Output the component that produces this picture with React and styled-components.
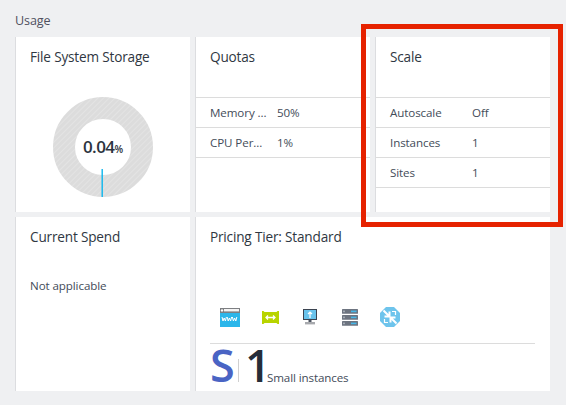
import React from 'react';
import styled, { createGlobalStyle } from 'styled-components';

const Global = createGlobalStyle`
  html, body { margin: 0; padding: 0; background: #eff0f2; }
  body { font-family: "Open Sans", "Noto Sans", sans-serif; color: #3c4654; overflow: hidden; }
`;
const Page = styled.div`
  position: relative; width: 566px; height: 405px; box-sizing: border-box; padding: 12px 0 0 15px; overflow: hidden;
`;
const Heading = styled.div`
  font-size: 12.6px; line-height: 18px; height: 25px; letter-spacing: -0.15px; color: #50505f;
`;
const Grid = styled.div`
  display: grid; grid-template-columns: 175px 175px 175px; grid-template-rows: 175px 174px; gap: 5px;
`;
const Card = styled.section`
  background: #fff; border-left: 1px solid #dcdde0; grid-column: span ${p => p.$span || 1};
  display: flex; flex-direction: column; min-width: 0;
`;
const Title = styled.h2`
  margin: 0; padding: 11px 14px 0; font-weight: 400; font-size: 13.6px; line-height: 18px; color: #2f3742; letter-spacing: -0.18px; white-space: nowrap;
`;
const Rows = styled.div`
  margin-top: 31px; border-top: 1px solid #dcdcdc;
`;
const Row = styled.div`
  display: grid; grid-template-columns: ${p => p.$label}px 1fr; height: 29px; padding: 0 14px; align-items: center;
  border-bottom: 1px solid #dcdcdc; font-size: 11.6px; letter-spacing: -0.1px; color: #434c59;
  & > span:first-child { white-space: nowrap; }
`;
const DonutWrap = styled.div`
  position: relative; width: 100px; height: 100px; margin: 31px 0 0 37px;
`;
const DonutLabel = styled.div`
  position: absolute; inset: 0; display: flex; align-items: center; justify-content: center; padding-bottom: 1px;
  font-size: 17px; font-weight: 600; letter-spacing: -0.6px; color: #2c3440;
  & small { font-size: 10px; font-weight: 600; margin-top: 4px; letter-spacing: 0; }
`;
const Plain = styled.p`
  margin: 31px 0 0; padding: 0 14px; font-size: 11.6px; letter-spacing: -0.1px; color: #434c59; line-height: 18px;
`;
const Icons = styled.div`
  display: flex; align-items: center; margin: 60px 0 0 14px; height: 22px;
`;
const IconSlot = styled.div`
  width: 40px; display: flex; justify-content: center; align-items: center;
`;
const Tier = styled.div`
  margin: 15px 14px 0; border-top: 1px solid #dcdcdc; display: flex; align-items: flex-end; height: 41px; width: 325px;
`;
const TierLetter = styled.span`
  font-size: 45px; line-height: 42px; color: #4a64c4; font-weight: 600; width: 28px; margin-bottom: -1px;
`;
const TierSep = styled.span`
  width: 1px; height: 23px; background: #d0d0d0; margin: 0 6px 3px 0;
`;
const TierCount = styled.span`
  font-size: 45px; line-height: 42px; color: #262d38; font-weight: 600; width: 22px; margin-bottom: -1px;
`;
const TierLabel = styled.span`
  font-size: 11.6px; letter-spacing: -0.12px; line-height: 16px; color: #434c59; margin-bottom: -1px;
`;
const RedBox = styled.div`
  position: absolute; left: 361px; top: 24px; width: 202px; height: 203px; box-sizing: border-box; border: 5px solid #e62200;
`;

const Donut = () => (
  <svg width="100" height="100" viewBox="0 0 100 100">
    <defs>
      <pattern id="hatch" width="4" height="4" patternUnits="userSpaceOnUse" patternTransform="rotate(45)">
        <rect width="4" height="4" fill="#dcdcdc" />
        <rect width="1" height="4" fill="#e3e3e3" />
      </pattern>
    </defs>
    <circle cx="50" cy="50" r="39" fill="none" stroke="url(#hatch)" strokeWidth="22" />
    <rect x="48.5" y="72" width="1.4" height="28" fill="#0db6ee" />
  </svg>
);

const WwwIcon = () => (
  <svg width="20" height="19" viewBox="0 0 20 19">
    <rect width="20" height="5" fill="#7d7f82" />
    <rect x="4" y="1" width="15" height="2.4" fill="#f4f4f4" />
    <circle cx="2" cy="2.4" r="1.2" fill="#fff" />
    <rect y="5" width="20" height="14" fill="#2bb6ea" />
    <path d="M2 9l1 4 1.2-3 1.2 3 1-4M7.2 9l1 4 1.2-3 1.2 3 1-4M12.4 9l1 4 1.2-3 1.2 3 1-4" fill="none" stroke="#fff" strokeWidth="1" />
  </svg>
);
const GreenIcon = () => (
  <svg width="17" height="13" viewBox="0 0 17 13">
    <path d="M0 0h1.5l1 1h12l1-1H17v13h-1.5l-1-1h-12l-1 1H0z" fill="#b8d400" />
    <path d="M4 6.5h9M6 4.5l-2 2 2 2M11 4.5l2 2-2 2" fill="none" stroke="#fff" strokeWidth="1.3" />
  </svg>
);
const MonitorIcon = () => (
  <svg width="14" height="16" viewBox="0 0 14 16">
    <rect width="14" height="11" fill="#3b4350" />
    <rect x="1" y="1" width="12" height="9" fill="#69c3ec" />
    <path d="M7 9V3M5 5l2-2 2 2" fill="none" stroke="#fff" strokeWidth="1.2" />
    <rect x="5.5" y="11" width="3" height="2" fill="#4c5360" />
    <rect x="2" y="13" width="10" height="2.4" fill="#a7a9ad" />
  </svg>
);
const ServerIcon = () => (
  <svg width="16" height="17" viewBox="0 0 16 17">
    {[0, 6, 12].map(y => (
      <g key={y}>
        <rect y={y} width="16" height="4.8" rx="0.6" fill="#6d7480" />
        <rect x="1.2" y={y + 1.6} width="1.6" height="1.6" fill="#b4bac2" />
        <rect x="9" y={y + 1.6} width="5.5" height="1.6" fill="#45b7e8" />
      </g>
    ))}
  </svg>
);
const ArrowsIcon = () => (
  <svg width="20" height="20" viewBox="0 0 20 20">
    <path d="M6 0h8l6 6v8l-6 6H6l-6-6V6z" fill="#6ec4ec" />
    <path d="M3.5 3.5l6 6M9.5 4.5v5h-5M16.5 16.5l-6-6M10.5 15.5v-5h5" fill="none" stroke="#fff" strokeWidth="2" />
    <path d="M12 4.5l3.5 0 0 3.5M8 15.5l-3.5 0 0-3.5" fill="none" stroke="#fff" strokeWidth="1.2" />
  </svg>
);

export default function App() {
  return (
    <Page>
      <Global />
      <Heading>Usage</Heading>
      <Grid>
        <Card>
          <Title>File System Storage</Title>
          <DonutWrap>
            <Donut />
            <DonutLabel>0.04<small>%</small></DonutLabel>
          </DonutWrap>
        </Card>
        <Card>
          <Title>Quotas</Title>
          <Rows>
            <Row $label={67}><span>Memory ...</span><span>50%</span></Row>
            <Row $label={67}><span>CPU Per...</span><span>1%</span></Row>
          </Rows>
        </Card>
        <Card>
          <Title>Scale</Title>
          <Rows>
            <Row $label={82}><span>Autoscale</span><span>Off</span></Row>
            <Row $label={82}><span>Instances</span><span>1</span></Row>
            <Row $label={82}><span>Sites</span><span>1</span></Row>
          </Rows>
        </Card>
        <Card>
          <Title>Current Spend</Title>
          <Plain>Not applicable</Plain>
        </Card>
        <Card $span={2}>
          <Title>Pricing Tier: Standard</Title>
          <Icons>
            <IconSlot><WwwIcon /></IconSlot>
            <IconSlot><GreenIcon /></IconSlot>
            <IconSlot><MonitorIcon /></IconSlot>
            <IconSlot><ServerIcon /></IconSlot>
            <IconSlot><ArrowsIcon /></IconSlot>
          </Icons>
          <Tier>
            <TierLetter>S</TierLetter>
            <TierSep />
            <TierCount>1</TierCount>
            <TierLabel>Small instances</TierLabel>
          </Tier>
        </Card>
      </Grid>
      <RedBox />
    </Page>
  );
}
